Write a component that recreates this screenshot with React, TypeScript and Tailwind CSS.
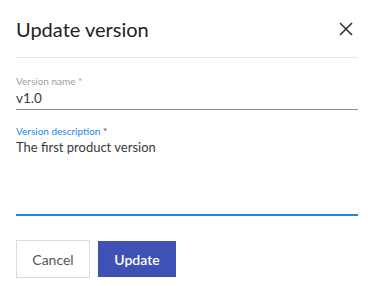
export default function App() {
  return (
    <div className="w-[369px] h-[286px] bg-white font-['Lato',sans-serif]">
      <div className="flex items-center justify-between pl-4 pr-[11px]">
        <div className="flex w-full items-center justify-between pt-[17px] pb-4 border-b border-[#e4e4e4]">
          <h1 className="text-[20px] leading-6 text-[#222]">Update version</h1>
          <button className="mr-[5px] text-[#333]">
            <svg width="14" height="14" viewBox="0 0 14 14">
              <path d="M1 1L13 13M13 1L1 13" stroke="currentColor" strokeWidth="1.6" />
            </svg>
          </button>
        </div>
      </div>

      <div className="pl-4 pr-[11px] pt-[17px]">
        <label className="block text-[10px] leading-3 text-[#a0a0a0]">Version name *</label>
        <div className="mt-[1px] pb-[1px] border-b border-[#8a8a8a] text-[13.5px] leading-5 text-[#3a3a3a]">v1.0</div>

        <label className="block mt-[15px] text-[10px] leading-3 text-[#1e88e5]">
          Version description <span className="text-[#444]">*</span>
        </label>
        <div className="h-[79px] border-b-2 border-[#1e88e5] text-[13px] leading-5 text-[#3a3a3a]">
          The first product version
        </div>

        <div className="flex items-center gap-2 mt-6">
          <button className="h-[38px] w-[74px] border border-[#dcdcdc] text-[14px] text-[#555] bg-white">Cancel</button>
          <button className="h-9 w-[78px] bg-[#3f51b5] text-[14px] font-semibold text-white">Update</button>
        </div>
      </div>
    </div>
  );
}
